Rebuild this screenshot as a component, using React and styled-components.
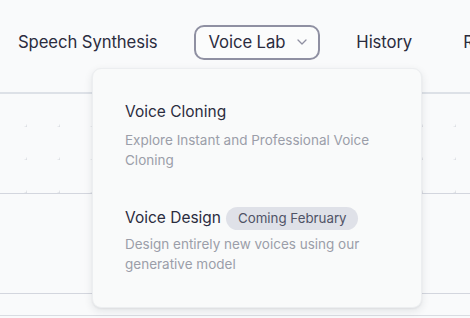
import React from "react";
import styled, { createGlobalStyle } from "styled-components";

const Global = createGlobalStyle`
  html, body { margin: 0; padding: 0; background: #f9fafb; }
  body { font-family: Inter, "Noto Sans", sans-serif; overflow: hidden; }
  * { box-sizing: border-box; }
`;

const Page = styled.div`
  position: relative;
  width: 470px;
  height: 318px;
  overflow: hidden;
  background: #f9fafb;
`;

const Nav = styled.nav`
  display: flex;
  align-items: center;
  gap: 21px;
  height: 92px;
  padding: 0 0 8px 3px;
  white-space: nowrap;
`;

const NavItem = styled.div`
  display: flex;
  align-items: center;
  gap: 12px;
  height: 35px;
  padding: 0 ${(p) => (p.$active ? "11px" : "13px")} 0 13px;
  border: 2px solid ${(p) => (p.$active ? "#8f90a2" : "transparent")};
  border-radius: 10px;
  background: ${(p) => (p.$active ? "#fbfcfc" : "transparent")};
  font-size: 16.7px;
  color: #2b2c3e;
  letter-spacing: -0.1px;
`;

const Rule = styled.div`
  height: ${(p) => p.$h || 1}px;
  background: ${(p) => p.$c || "#d3d6de"};
`;

const Band = styled.div`
  height: ${(p) => p.$h}px;
  display: block;
`;

const Dropdown = styled.div`
  position: absolute;
  left: 92px;
  top: 68px;
  width: 330px;
  height: 240px;
  background: #f9fafa;
  border: 1px solid #eceef0;
  border-radius: 9px;
  box-shadow: 0 3px 8px rgba(30, 35, 50, 0.1), 0 1px 2px rgba(30, 35, 50, 0.06);
  padding: 31px 32px 0 32px;
  display: flex;
  flex-direction: column;
  gap: 36px;
`;

const Item = styled.div`
  display: flex;
  flex-direction: column;
  gap: ${(p) => p.$gap}px;
`;

const TitleRow = styled.div`
  display: flex;
  align-items: center;
  gap: 5px;
  height: ${(p) => p.$h}px;
`;

const Title = styled.div`
  font-size: 15.5px;
  line-height: 24px;
  color: #2b2c3e;
`;

const Badge = styled.span`
  display: inline-flex;
  align-items: center;
  height: 23px;
  padding: 0 11px 0 12px;
  border-radius: 12px;
  background: #dfe1e8;
  color: #4f5366;
  font-size: 13.3px;
`;

const Desc = styled.div`
  font-size: 13.5px;
  line-height: 20px;
  color: #9b9ea9;
  width: 260px;
`;

function Dots() {
  return (
    <svg width="470" height="100" style={{ display: "block" }}>
      <defs>
        <pattern id="pl" x="-6" y="-33" width="33" height="33" patternUnits="userSpaceOnUse">
          <path d="M33 30.5v5M30.5 33h5" stroke="#d6d9df" strokeWidth="1.2" />
        </pattern>
      </defs>
      <rect width="470" height="100" fill="url(#pl)" />
    </svg>
  );
}

function Chevron() {
  return (
    <svg width="10" height="6" viewBox="0 0 10 6" fill="none">
      <path d="M1 1l4 4 4-4" stroke="#8f90a2" strokeWidth="1.3" strokeLinecap="round" strokeLinejoin="round" />
    </svg>
  );
}

export default function App() {
  return (
    <Page>
      <Global />
      <Nav>
        <NavItem>Speech Synthesis</NavItem>
        <NavItem $active>
          Voice Lab <Chevron />
        </NavItem>
        <NavItem>History</NavItem>
        <NavItem>Resources</NavItem>
      </Nav>
      <Rule $h={2} $c="#dde1e7" />
      <Band $h={99}>
        <Dots />
      </Band>
      <Rule />
      <Band $h={99} />
      <Rule />
      <Band $h={21} />
      <Rule $c="#d9dce2" />
      <Dropdown>
        <Item $gap={6}>
          <TitleRow $h={24}>
            <Title>Voice Cloning</Title>
          </TitleRow>
          <Desc>Explore Instant and Professional Voice Cloning</Desc>
        </Item>
        <Item $gap={4}>
          <TitleRow $h={24}>
            <Title>Voice Design</Title>
            <Badge>Coming February</Badge>
          </TitleRow>
          <Desc>Design entirely new voices using our generative model</Desc>
        </Item>
      </Dropdown>
    </Page>
  );
}
